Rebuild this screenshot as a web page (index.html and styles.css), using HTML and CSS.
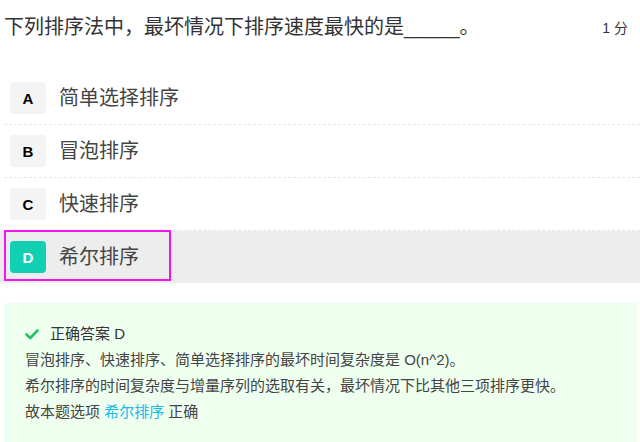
FILE: index.html
```html
<!DOCTYPE html>
<html lang="zh-CN">
<head>
  <meta charset="UTF-8">
  <meta name="viewport" content="width=device-width, initial-scale=1.0">
  <title>单选题</title>
  <link rel="stylesheet" href="styles.css">
</head>
<body>
  <div class="question">
    <div class="question-head">
      <div class="question-title">下列排序法中，最坏情况下排序速度最快的是_____。</div>
      <div class="question-score">1 分</div>
    </div>

    <ul class="options">
      <li class="option">
        <span class="option-key">A</span>
        <span class="option-text">简单选择排序</span>
      </li>
      <li class="option">
        <span class="option-key">B</span>
        <span class="option-text">冒泡排序</span>
      </li>
      <li class="option">
        <span class="option-key">C</span>
        <span class="option-text">快速排序</span>
      </li>
      <li class="option selected">
        <span class="option-key">D</span>
        <span class="option-text">希尔排序</span>
        <span class="highlight"></span>
      </li>
    </ul>

    <div class="analysis">
      <div class="answer-line">
        <svg class="check" width="14" height="11" viewBox="0 0 14 11">
          <path d="M1.5 5.5 L5.2 9 L12.5 1.5" fill="none" stroke="#22c464" stroke-width="2.6" stroke-linecap="round" stroke-linejoin="round"/>
        </svg>
        <span>正确答案 D</span>
      </div>
      <p>冒泡排序、快速排序、简单选择排序的最坏时间复杂度是 O(n^2)。</p>
      <p>希尔排序的时间复杂度与增量序列的选取有关，最坏情况下比其他三项排序更快。</p>
      <p>故本题选项 <span class="link">希尔排序</span> 正确</p>
    </div>
  </div>
</body>
</html>
```

FILE: styles.css
```css
body {
  margin: 0;
  background: #fff;
  font-family: "Liberation Sans", "Noto Sans CJK SC", sans-serif;
  color: #333;
}

.question {
  padding: 12px 0 0 4px;
}

.question-head {
  display: flex;
  justify-content: space-between;
  align-items: center;
  padding-right: 12px;
}

.question-title {
  font-size: 20px;
  line-height: 30px;
  color: #333;
}

.question-score {
  font-size: 14px;
  color: #333;
}

.options {
  list-style: none;
  margin: 30px 0 0 0;
  padding: 0;
}

.option {
  position: relative;
  display: flex;
  align-items: center;
  gap: 13px;
  padding: 10px 6px;
  border-bottom: 1px dashed #e8e8e8;
}

.option-key {
  width: 36px;
  height: 32px;
  border-radius: 4px;
  background: #f4f4f4;
  display: flex;
  justify-content: center;
  align-items: center;
  font-size: 15px;
  font-weight: bold;
  color: #000;
}

.option-text {
  font-size: 20px;
  line-height: 32px;
  color: #444;
}

.option.selected {
  background: #ededed;
  border-bottom: none;
  margin-left: -4px;
  padding-left: 10px;
}

.option.selected .option-key {
  background: #11cfb3;
  color: #fff;
}

.highlight {
  position: absolute;
  left: 4px;
  top: -1px;
  width: 163px;
  height: 47px;
  border: 2px solid #f513f0;
}

.analysis {
  margin: 20px 2px 0 0;
  padding: 18px 0 20px 21px;
  background: #efffef;
  font-size: 15px;
  line-height: 26px;
  color: #444;
}

.analysis p {
  margin: 0;
}

.answer-line {
  display: flex;
  align-items: center;
  gap: 11px;
  color: #333;
}

.link {
  color: #1ab8f0;
}
```
